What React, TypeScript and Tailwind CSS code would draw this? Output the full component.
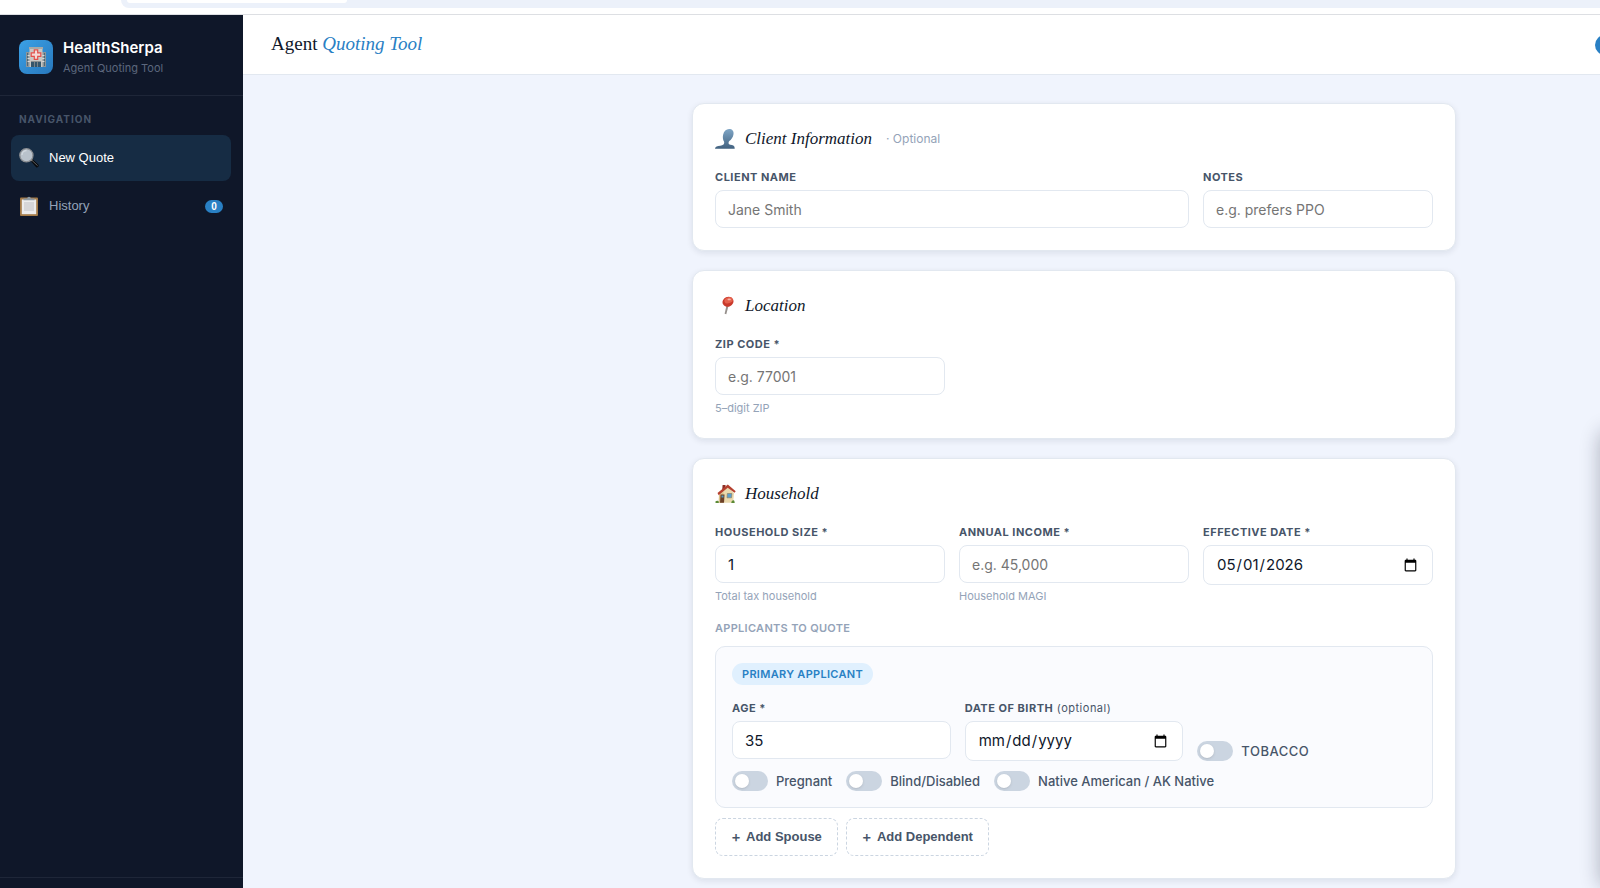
import React from "react";

const inputBase =
  "w-full rounded-lg border border-[#e2e8f0] bg-white px-3 text-[15px] text-[#0f172a] placeholder:text-[14px] placeholder:text-[#757575]";

const HospitalIcon = () => (
  <svg viewBox="0 0 20 20" className="size-5" aria-hidden="true">
    <path d="M0 5h5v15H0zM15 5h5v15h-5z" fill="#8d9599" />
    <path d="M1 6h1v13H1zM18 6h1v13h-1z" fill="#4d6878" />
    <path d="M1.5 8h3v1h-3zM1.5 11h3v1h-3zM1.5 14h3v1h-3zM15.5 8h3v1h-3zM15.5 11h3v1h-3zM15.5 14h3v1h-3z" fill="#d8dadb" />
    <path d="M3.500 1h13v19h-13z" fill="#c9c8c5" />
    <path d="M3 0h14v2H3z" fill="#a9aaa8" />
    <path d="M5 14h10v6H5z" fill="#35566b" />
    <path d="M5 14h10v1H5zM8 15h.8v5H8zM11.200 15h.8v5h-.8z" fill="#8b8f90" />
    <path d="M8.300 2.800h3.400v3.100h3.100v3.400h-3.100v3.100H8.300V9.300H5.200V5.900h3.100z" fill="#f4d9d6" stroke="#e4504a" strokeWidth="1.200" />
  </svg>
);

const SearchIcon = () => (
  <svg viewBox="0 0 20 20" className="size-5 shrink-0" aria-hidden="true">
    <path d="M11 12.200l1.800-1.700 6.700 6.300c1 1.200-1 3.400-2.300 2.500z" fill="#08090b" />
    <path d="M11.800 11.300l6.800 6.400" stroke="#6a6c70" strokeWidth=".9" />
    <path d="M10.600 12l1.800-1.600 1.400 1.300-1.700 1.700z" fill="#8a8378" />
    <circle cx="7.400" cy="7.300" r="6.600" fill="#b9c2cb" stroke="#8b8e92" strokeWidth="1.300" />
    <path d="M3 7a4.500 4.500 0 0 1 4.500-4.300" fill="none" stroke="#d5dbe0" strokeWidth="1.200" />
  </svg>
);

const ClipboardIcon = () => (
  <svg viewBox="0 0 20 20" className="size-5 shrink-0" aria-hidden="true">
    <rect x="1" y="1.500" width="18" height="18.500" rx="1" fill="#a47b48" />
    <path d="M2.800 3.500h14.400v14.700H2.800z" fill="#ececec" />
    <path d="M5 6h10v9H5z" fill="#d6d6d8" />
    <path d="M4.500 2.500h3.700a1.800 1.800 0 0 1 3.600 0h3.700v1.800h-11z" fill="#8d98a1" />
  </svg>
);

const PersonIcon = () => (
  <svg viewBox="0 0 20 20" className="size-5" aria-hidden="true">
    <defs>
      <linearGradient id="person" x1="0" y1="0" x2="0" y2="1">
        <stop offset="0" stopColor="#7fa6c6" />
        <stop offset="1" stopColor="#41617f" />
      </linearGradient>
    </defs>
    <path
      d="M14 0c3.300 0 5 2 4.500 5.200-.4 3.100-2.400 5.600-4.200 6.900-.8.600-1 2.600-.3 3.200 1.600.6 4.500.7 5.300 2.200.3.700.4 1.600.4 2.300H0c.1-.9.500-1.700 1.600-2.300 1.900-1 5.400-.9 6.900-2.100.8-.7.900-2 .5-2.900C8 11 7.500 8.500 8.100 5.800 8.900 2.200 11.200 0 14 0z"
      fill="url(#person)"
    />
  </svg>
);

const PinIcon = () => (
  <svg viewBox="0 0 20 20" className="size-5" aria-hidden="true">
    <path d="M11.600 9l2 .6-2.300 8.600-1.700-.4z" fill="#96908c" />
    <ellipse cx="13" cy="5.800" rx="5.600" ry="4.900" transform="rotate(-24 13 5.800)" fill="#c9392b" />
    <ellipse cx="13.600" cy="4.300" rx="4.300" ry="2.900" transform="rotate(-18 13.600 4.300)" fill="#e4604c" />
    <ellipse cx="14.200" cy="3.400" rx="1.700" ry=".9" fill="#f6b3a6" />
  </svg>
);

const HouseIcon = () => (
  <svg viewBox="0 0 22 20" className="h-5 w-[22px] shrink-0" aria-hidden="true">
    <path d="M5 9l8-6 6 6-.8 9.800H4z" fill="#ead9ae" />
    <path d="M4 11l4.500-3L8 18.800H3.500z" fill="#d9c08a" />
    <path d="M7.600 1h3l-.4 3-3 2z" fill="#8c2f26" />
    <path d="M2.500 9L12.800.6l7.900 6.600-1.100 1.600-6.900-5-9 7.400z" fill="#b5402f" />
    <path d="M5.500 10.500h4l-.5 8.300H5z" fill="#6d4127" />
    <path d="M12.300 9.500h4.600l-.4 4.300h-4.500z" fill="#5b9fd0" stroke="#8a7a5b" strokeWidth=".6" />
    <path d="M6.500 11.500h2v2h-2z" fill="#4f9bc9" />
    <path d="M.4 17.400c1.200-1.200 3-.9 3.400.3v1.300H.6zM16.300 18.900c0-2.300 2.600-3.600 3.200-1.400l.2 1.400z" fill="#5b8a35" />
  </svg>
);

type FieldProps = React.InputHTMLAttributes<HTMLInputElement> & {
  id: string;
  label: string;
  note?: string;
  hint?: string;
  className?: string;
};

const Field = ({ id, label, note, hint, className = "", type = "text", ...rest }: FieldProps) => (
  <div className={className}>
    <label htmlFor={id} className="mb-[5px] block text-[11px] leading-4 font-bold tracking-[0.5px] text-[#475569]">
      {label}
      {note && <span className="font-normal"> {note}</span>}
    </label>
    <input
      id={id}
      type={type}
      className={`${inputBase} ${type === "date" ? "h-10" : "h-[38px]"}`}
      {...rest}
    />
    {hint && <p className="mt-[5px] text-[11px] leading-4 text-[#94a3b8]">{hint}</p>}
  </div>
);

const Toggle = ({ label, className = "text-[13px] font-medium" }: { label: string; className?: string }) => (
  <label className={`flex items-center gap-2 leading-5 text-[#475569] ${className}`}>
    <input
      type="checkbox"
      className="h-5 w-9 shrink-0 appearance-none rounded-full bg-[#cbd5e1] p-[3px] before:block before:size-3.5 before:rounded-full before:bg-white before:shadow-sm checked:bg-[#2980c4] checked:before:ml-4"
    />
    {label}
  </label>
);

type CardProps = { icon: React.ReactNode; title: string; note?: string; children: React.ReactNode };

const Card = ({ icon, title, note, children }: CardProps) => (
  <section className="rounded-xl border border-[#e2e8f0] bg-white p-[22px] shadow-[0_2px_6px_rgba(15,23,42,0.09)]">
    <h2 className="mb-[17px] flex h-[26px] items-center font-['Liberation_Serif',serif] text-[17px] text-[#0f172a] italic">
      <span className="mr-2.5 flex w-5 shrink-0">{icon}</span>
      {title}
      {note && (
        <span className="ml-3.5 font-['Inter',sans-serif] text-[12px] text-[#94a3b8] not-italic">{note}</span>
      )}
    </h2>
    {children}
  </section>
);

const addButtons = ["Add Spouse", "Add Dependent"];

const App = () => {
  return (
    <div className="flex min-h-screen flex-col bg-white font-['Inter',sans-serif]">
      {/* browser toolbar edge */}
      <div className="h-[15px] border-b border-[#dddfe3] pl-[121px]">
        <div className="h-2 rounded-bl-xl bg-[#ecf1fa] pl-1.5">
          <div className="h-[3px] w-[220px] rounded-b-lg bg-white" />
        </div>
      </div>

      <div className="relative flex flex-1 overflow-hidden">
        <aside className="flex w-[243px] shrink-0 flex-col bg-[#0f1729]">
          <div className="flex h-[81px] items-center gap-2.5 border-b border-[#1e2638] px-[19px] pt-1">
            <div className="flex size-[34px] items-center justify-center rounded-lg bg-linear-to-br from-[#3ba1e6] to-[#2878bd]">
              <HospitalIcon />
            </div>
            <div>
              <p className="text-[15px] leading-5 font-semibold text-white">HealthSherpa</p>
              <p className="mt-0.5 text-[11px] leading-4 text-[#5c677d]">Agent Quoting Tool</p>
            </div>
          </div>
          <nav className="flex flex-col gap-0.5 px-[11px] pt-[15px] font-['Liberation_Sans',sans-serif] text-[13px]">
            <p className="mb-1.5 px-2 font-['Inter',sans-serif] text-[10px] leading-4 font-bold tracking-[1px] text-[#475569]">
              NAVIGATION
            </p>
            <button className="flex h-[46px] w-[220px] items-center gap-2.5 rounded-lg bg-[#162c44] px-2 text-white">
              <SearchIcon />
              New Quote
            </button>
            <button className="flex h-[46px] w-[220px] items-center gap-2.5 rounded-lg px-2 text-[#94a3b8]">
              <ClipboardIcon />
              History
              <span className="ml-auto flex h-[13px] w-[18px] items-center justify-center rounded-full bg-[#2980c4] text-[10px] font-bold text-white">
                0
              </span>
            </button>
          </nav>
          <div className="mt-auto h-[11px] border-t border-[#1e2638]" />
        </aside>

        <div className="flex min-w-0 flex-1 flex-col">
          <header className="flex h-[60px] items-center border-b border-[#e2e8f0] bg-white pl-7">
            <h1 className="font-['Liberation_Serif',serif] text-[19px] text-[#0f172a]">
              Agent <em className="text-[#2980c4]">Quoting Tool</em>
            </h1>
            <span className="-mr-[15px] ml-auto size-5 shrink-0 rounded-full bg-[#2980c4]" />
          </header>

          <main className="flex-1 bg-[#f0f4fd] pt-7 pr-36 pb-2 pl-7">
            <form className="ml-auto flex max-w-[764px] flex-col gap-[19px]">
              <Card icon={<PersonIcon />} title="Client Information" note="· Optional">
                <div className="grid grid-cols-3 gap-3.5">
                  <Field id="client-name" label="CLIENT NAME" placeholder="Jane Smith" className="col-span-2" />
                  <Field id="notes" label="NOTES" placeholder="e.g. prefers PPO" />
                </div>
              </Card>

              <Card icon={<PinIcon />} title="Location">
                <div className="grid grid-cols-3 gap-3.5">
                  <Field id="zip" label="ZIP CODE *" placeholder="e.g. 77001" hint="5–digit ZIP" />
                </div>
              </Card>

              <Card icon={<HouseIcon />} title="Household">
                <div className="grid grid-cols-3 gap-3.5">
                  <Field id="size" label="HOUSEHOLD SIZE *" defaultValue="1" hint="Total tax household" />
                  <Field id="income" label="ANNUAL INCOME *" placeholder="e.g. 45,000" hint="Household MAGI" />
                  <Field id="effective" label="EFFECTIVE DATE *" type="date" defaultValue="2026-05-01" />
                </div>

                <h3 className="mt-4 mb-2.5 text-[11px] leading-4 font-semibold tracking-[0.3px] text-[#94a3b8]">
                  APPLICANTS TO QUOTE
                </h3>
                <div className="rounded-[10px] border border-[#e2e8f0] bg-[#fafbfe] p-4">
                  <span className="mb-[15px] flex h-[22px] w-fit items-center rounded-full bg-[#e0f0fe] px-2.5 text-[11px] font-semibold tracking-[0.3px] text-[#2980c4]">
                    PRIMARY APPLICANT
                  </span>
                  <div className="grid grid-cols-3 gap-3.5">
                    <Field id="age" label="AGE *" defaultValue="35" />
                    <Field id="dob" label="DATE OF BIRTH" note="(optional)" type="date" />
                    <div className="self-end">
                      <Toggle label="TOBACCO" className="text-[13px] font-medium tracking-[0.5px]" />
                    </div>
                  </div>
                  <div className="mt-2.5 flex gap-3.5">
                    <Toggle label="Pregnant" />
                    <Toggle label="Blind/Disabled" />
                    <Toggle label="Native American / AK Native" />
                  </div>
                </div>

                <div className="mt-2.5 flex gap-2 font-['Liberation_Sans',sans-serif]">
                  {addButtons.map((label) => (
                    <button
                      key={label}
                      type="button"
                      className="flex h-[38px] items-center gap-[5px] rounded-lg border border-dashed border-[#cbd5e1] px-[15px] text-[13px] font-bold text-[#475569]"
                    >
                      <span className="font-['Inter',sans-serif] text-[15px] font-medium">+</span>
                      {label}
                    </button>
                  ))}
                </div>
              </Card>
            </form>
          </main>
        </div>

        {/* shadow of the panel parked off the right edge */}
        <div className="pointer-events-none absolute top-[415px] -right-10 bottom-0 w-10 rounded-l-xl shadow-[0_0_20px_rgba(15,23,42,0.3)]" />
      </div>
    </div>
  );
};

export default App;
